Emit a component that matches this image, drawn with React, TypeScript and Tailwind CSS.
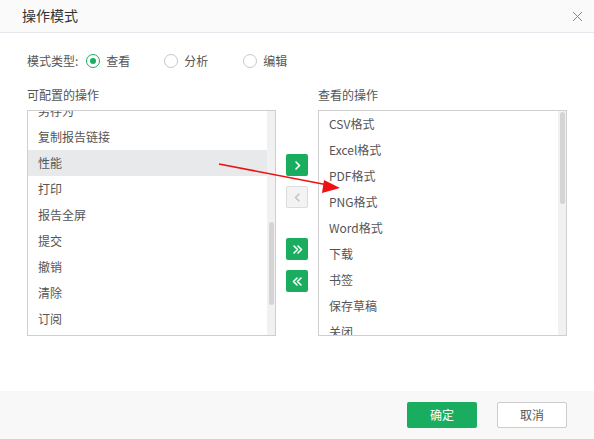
import React from "react";

const leftItems = ["另存为", "复制报告链接", "性能", "打印", "报告全屏", "提交", "撤销", "清除", "订阅"];
const rightItems = ["CSV格式", "Excel格式", "PDF格式", "PNG格式", "Word格式", "下载", "书签", "保存草稿", "关闭"];

function Radio({ checked, label }: { checked?: boolean; label: string }) {
  return (
    <div className="flex items-center gap-[6px]">
      {checked ? (
        <span className="w-[14px] h-[14px] rounded-full border border-[#1aad5f] flex items-center justify-center bg-white">
          <span className="w-[6px] h-[6px] rounded-full bg-[#1aad5f]" />
        </span>
      ) : (
        <span className="w-[14px] h-[14px] rounded-full border border-[#c8c8c8] bg-white" />
      )}
      <span className="text-[12px] text-[#555]">{label}</span>
    </div>
  );
}

function Chev({ dir, dbl, color }: { dir: "r" | "l"; dbl?: boolean; color: string }) {
  const single = dir === "r" ? "M4 2 L7.5 5.5 L4 9" : "M7 2 L3.5 5.5 L7 9";
  const d2 = dir === "r" ? "M2 2 L5.5 5.5 L2 9 M6 2 L9.5 5.5 L6 9" : "M5 2 L1.5 5.5 L5 9 M9 2 L5.5 5.5 L9 9";
  return (
    <svg width="11" height="11" viewBox="0 0 11 11" fill="none">
      <path d={dbl ? d2 : single} stroke={color} strokeWidth="1.6" strokeLinecap="round" strokeLinejoin="round" />
    </svg>
  );
}

export default function App() {
  return (
    <div
      className="relative w-[594px] h-[439px] bg-white flex flex-col overflow-hidden"
      style={{ fontFamily: '"Noto Sans CJK SC", "Noto Sans", sans-serif' }}
    >
      <div className="h-[33px] shrink-0 bg-[#fafafa] border-b border-[#e3e7eb] flex items-center justify-between pl-[22px] pr-[11px]">
        <span className="text-[14px] text-[#333] leading-none -mt-[2px]">操作模式</span>
        <svg width="11" height="11" viewBox="0 0 11 11" fill="none">
          <path d="M1 1 L10 10 M10 1 L1 10" stroke="#888" strokeWidth="1" />
        </svg>
      </div>

      <div className="px-[27px] pt-[18px] flex flex-col">
        <div className="h-[20px] flex items-center">
          <span className="text-[12px] text-[#555] mr-[7px]">模式类型:</span>
          <div className="w-[79px] pl-[1px]"><Radio checked label="查看" /></div>
          <div className="w-[79px]"><Radio label="分析" /></div>
          <Radio label="编辑" />
        </div>

        <div className="mt-[16px] h-[16px] flex text-[12px] text-[#555] leading-[16px]">
          <span className="w-[291px]">可配置的操作</span>
          <span>查看的操作</span>
        </div>

        <div className="mt-[7px] flex">
          <div className="w-[249px] h-[226px] border border-[#cfcfcf] flex overflow-hidden">
            <div className="flex-1 overflow-hidden">
              <div className="-mt-[13px]">
                {leftItems.map((t) => (
                  <div
                    key={t}
                    className={`h-[26px] flex items-center pl-[10px] text-[12px] text-[#555] ${t === "性能" ? "bg-[#e8e9eb]" : ""}`}
                  >
                    {t}
                  </div>
                ))}
              </div>
            </div>
            <div className="w-[8px] bg-[#f1f1f1] flex justify-center pt-[111px]">
              <div className="w-[5px] h-[83px] rounded-full bg-[#d4d4d4]" />
            </div>
          </div>

          <div className="w-[42px] flex flex-col items-center pt-[44px]">
            <div className="w-[22px] h-[22px] rounded-[2px] bg-[#1aad5f] flex items-center justify-center">
              <Chev dir="r" color="#fff" />
            </div>
            <div className="mt-[10px] w-[22px] h-[22px] rounded-[2px] bg-[#f3f3f3] border border-[#dcdcdc] flex items-center justify-center">
              <Chev dir="l" color="#c4c4c4" />
            </div>
            <div className="mt-[30px] w-[22px] h-[22px] rounded-[2px] bg-[#1aad5f] flex items-center justify-center">
              <Chev dir="r" dbl color="#fff" />
            </div>
            <div className="mt-[10px] w-[22px] h-[22px] rounded-[2px] bg-[#1aad5f] flex items-center justify-center">
              <Chev dir="l" dbl color="#fff" />
            </div>
          </div>

          <div className="w-[249px] h-[226px] border border-[#cfcfcf] flex overflow-hidden">
            <div className="flex-1 overflow-hidden">
              {rightItems.map((t) => (
                <div key={t} className="h-[26px] flex items-center pl-[10px] text-[12px] text-[#555]">
                  {t}
                </div>
              ))}
            </div>
            <div className="w-[8px] bg-[#f1f1f1] flex justify-center pt-[1px]">
              <div className="w-[5px] h-[92px] rounded-full bg-[#d4d4d4]" />
            </div>
          </div>
        </div>
      </div>

      <div className="mt-auto h-[48px] shrink-0 bg-[#f8f8f8] flex items-center justify-end gap-[20px] pr-[27px]">
        <button className="w-[70px] h-[26px] rounded-[2px] bg-[#1aad5f] text-white text-[12px]">确定</button>
        <button className="w-[70px] h-[26px] rounded-[2px] bg-white border border-[#cccccc] text-[#555] text-[12px]">取消</button>
      </div>

      <svg className="absolute left-0 top-0 pointer-events-none" width="594" height="439">
        <line x1="219" y1="164" x2="328" y2="185" stroke="#ee1111" strokeWidth="1.6" />
        <polygon points="340,188 324,180 322,193" fill="#ee1111" />
      </svg>
    </div>
  );
}
